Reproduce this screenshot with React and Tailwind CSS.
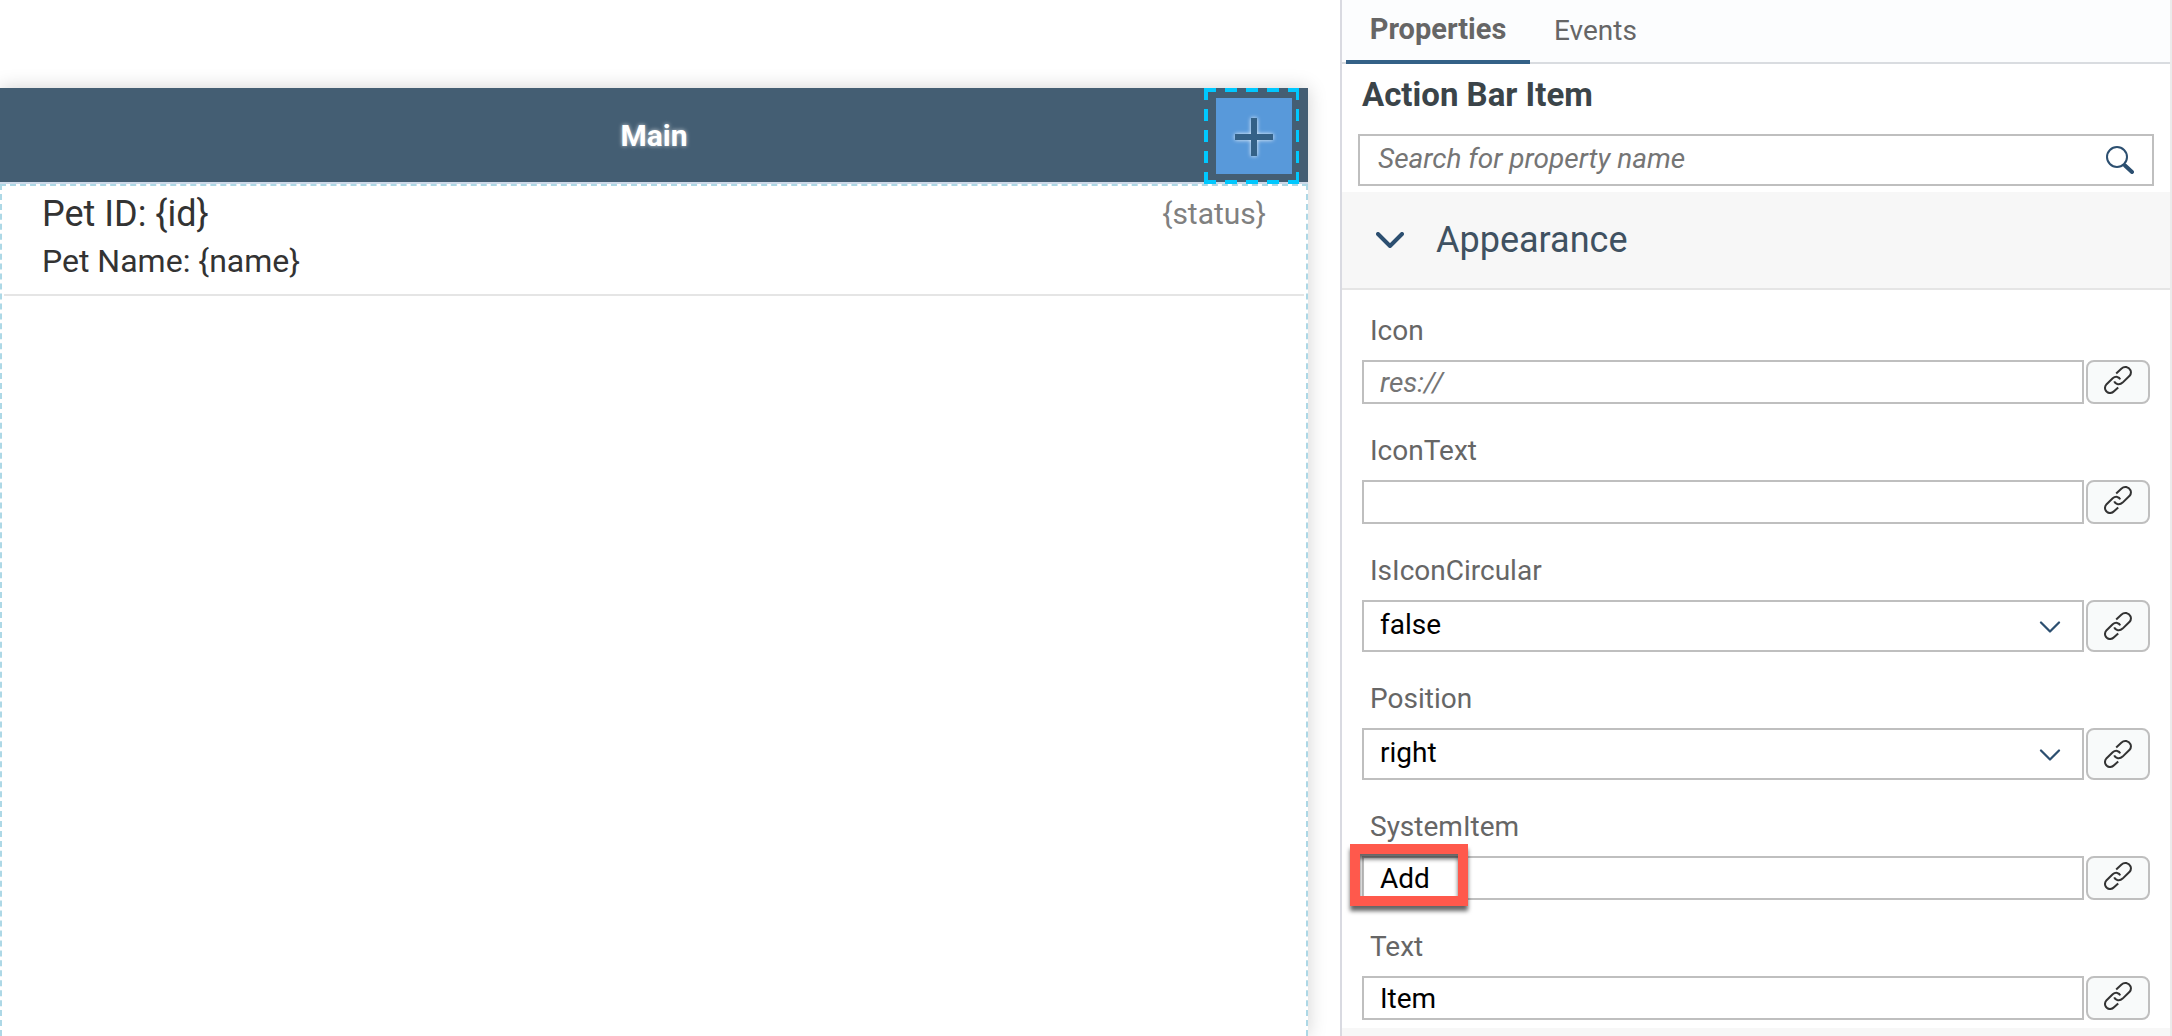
import { useId, useState } from "react";

function LinkIcon() {
  return (
    <svg className="size-7" viewBox="0 0 28 28" fill="none" stroke="#333333" strokeWidth="2" aria-hidden="true">
      <path d="M12.2 7.4 17.3 2.7Q19.6.6 22.3 1.1 25.4 1.8 26.6 4.5 27.6 7.4 25.6 9.8L18.6 16.6Q16.2 18.8 13.3 18 11 17.2 10.2 15.4" />
      <path d="M16.2 13.3Q15.5 11.4 13.2 10.9 10.7 10.5 8.7 12.3L2.6 18.2Q.2 20.9 1.4 23.8 2.6 26.6 5.6 27 8.2 27.2 10 25.3L14.2 21.5" />
    </svg>
  );
}

function Chevron({ className, strokeWidth }) {
  return (
    <svg className={className} viewBox="0 0 28 16" fill="none" stroke="#2c4f70" strokeWidth={strokeWidth} strokeLinecap="round" strokeLinejoin="round" aria-hidden="true">
      <path d="M2 2 14 14 26 2" />
    </svg>
  );
}

function SearchIcon() {
  return (
    <svg className="size-7" viewBox="0 0 28 28" fill="none" stroke="#2c4f70" strokeLinecap="round" aria-hidden="true">
      <circle cx="11" cy="11" r="10" strokeWidth="2" />
      <path d="M19 19.5 26 26" strokeWidth="4" />
    </svg>
  );
}

function SelectionFrame() {
  return (
    <svg className="pointer-events-none absolute left-0 top-0 h-24 w-[95px]" viewBox="0 0 95 96" fill="none" stroke="#00c8ff" strokeWidth="4" strokeDasharray="12 9" aria-hidden="true">
      <path d="M0 2H96" />
      <path d="M0 94H96" />
      <path d="M2 0V96" />
      <path d="M93.5 0V96" strokeWidth="3" />
    </svg>
  );
}

function Field({ label, value = "", placeholder, options, highlighted }) {
  const id = useId();
  const [current, setCurrent] = useState(value);
  const change = (event) => setCurrent(event.target.value);
  const box = "w-full border-2 border-[#bfbfbf] bg-white px-4 text-black outline-none";
  return (
    <div>
      <label htmlFor={id} className="ml-2 block w-fit leading-[34px] text-[#666666]">{label}</label>
      <div className="relative mt-3 flex gap-0.5">
        <div className="relative grow">
          {options ? (
            <>
              <select id={id} value={current} onChange={change} className={`${box} block h-13 appearance-none pb-0.5`}>
                {options.map((option) => <option key={option}>{option}</option>)}
              </select>
              <Chevron className="pointer-events-none absolute right-5.5 top-[21px] h-3 w-6" strokeWidth="3" />
            </>
          ) : (
            <input id={id} type="text" value={current} onChange={change} placeholder={placeholder} className={`${box} block h-11 placeholder:italic placeholder:text-[#757575]`} />
          )}
        </div>
        <button type="button" aria-label={`Bind ${label}`} className={`flex w-16 items-center justify-center rounded-lg border-2 border-[#bfbfbf] bg-[#f8fafa] ${options ? "" : "pb-1"}`}>
          <LinkIcon />
        </button>
        {highlighted && (
          <div className="pointer-events-none absolute -left-3 -top-3 h-[62px] w-[118px] border-10 border-[#ff594c] drop-shadow-[0_5px_2px_rgba(0,0,0,0.6)]" />
        )}
      </div>
    </div>
  );
}

function Canvas() {
  return (
    <main className="mr-8 mt-22 flex min-w-0 grow flex-col bg-white shadow-[0_0_18px_rgba(0,0,0,0.18)]">
      <header className="relative flex h-24 flex-col">
        <div className="flex h-[94px] items-center justify-center bg-[#445e73]">
          <h1 className="text-[30px] font-bold text-white [text-shadow:0_0_4px_rgba(255,255,255,0.7)]">Main</h1>
        </div>
        <div className="h-0.5 bg-[#cdd9e8]" />
        <div className="absolute right-[9px] top-0 h-24 w-[95px]">
          <button type="button" aria-label="Add" className="ml-3 mt-2.5 flex size-[76px] items-center justify-center bg-[#5899da]">
            <svg className="size-12 drop-shadow-[0_0_2px_rgba(255,255,255,0.9)]" viewBox="0 0 48 48" stroke="#346187" strokeWidth="6" aria-hidden="true">
              <path d="M5 25H43M24 6V44" />
            </svg>
          </button>
          <SelectionFrame />
        </div>
      </header>
      <section className="grow border-2 border-b-0 border-dashed border-[#add8e6]">
        <article className="mx-0.5 flex items-start justify-between border-b-2 border-[#e5e5e5] px-[38px] pb-3.5 pt-1">
          <div className="text-[#333333]">
            <h2 className="text-[36px] leading-12">Pet ID: {"{id}"}</h2>
            <p className="mt-1 text-[32px] leading-[38px]">Pet Name: {"{name}"}</p>
          </div>
          <span className="text-[30px] leading-12 text-[#808080]">{"{status}"}</span>
        </article>
      </section>
    </main>
  );
}

function PropertiesPanel() {
  return (
    <aside className="w-[832px] shrink-0 border-x-2 border-l-[#d9dae1] border-r-[#ebebeb] bg-white">
      <nav className="flex h-16 border-b-2 border-[#d9dce0] bg-[#fcfdfe] pl-1">
        <button type="button" className="-mb-0.5 h-16 w-46 border-b-4 border-[#346187] text-[29px] font-bold text-[#666666]">Properties</button>
        <button type="button" className="ml-6 h-[62px] text-[28px] text-[#666666]">Events</button>
      </nav>
      <h2 className="px-5 pt-3 text-[33px] font-bold leading-[38px] text-[#3b4449]">Action Bar Item</h2>
      <div className="mx-4 mt-5 flex h-13 items-center border-2 border-[#bfbfbf] bg-white">
        <input type="search" aria-label="Search for property name" placeholder="Search for property name" className="h-full min-w-0 grow pb-1 pl-4.5 outline-none placeholder:italic placeholder:text-[#757575]" />
        <button type="button" aria-label="Search" className="mr-4.5"><SearchIcon /></button>
      </div>
      <button type="button" className="mt-1.5 flex h-[98px] w-full items-center border-b-2 border-[#e5e5e5] bg-[#f7f7f7] pl-8.5 text-left">
        <Chevron className="h-4 w-7" strokeWidth="4" />
        <span className="ml-8 text-[36px] text-[#3f5161]">Appearance</span>
      </button>
      <form className="flex flex-col gap-7.5 px-5 pb-2 pt-6">
        <Field label="Icon" placeholder="res://" />
        <Field label="IconText" />
        <Field label="IsIconCircular" value="false" options={["false", "true"]} />
        <Field label="Position" value="right" options={["right", "left"]} />
        <Field label="SystemItem" value="Add" highlighted />
        <Field label="Text" value="Item" />
      </form>
      <div className="h-24 bg-[#f7f7f7]" />
    </aside>
  );
}

export default function App() {
  return (
    <div className="flex h-screen overflow-hidden bg-white font-[Roboto,sans-serif] text-[28px]">
      <Canvas />
      <PropertiesPanel />
    </div>
  );
}
